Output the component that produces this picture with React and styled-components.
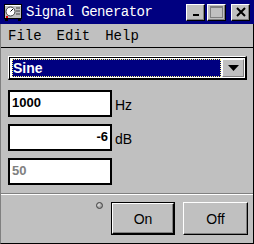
import React from "react";
import styled, { createGlobalStyle } from "styled-components";

const Global = createGlobalStyle`
  html, body { margin: 0; padding: 0; background: #c0c0c0; }
  body { font-family: "Liberation Sans", Arial, sans-serif; }
`;

const Window = styled.div`
  width: 254px;
  height: 244px;
  box-sizing: border-box;
  display: flex;
  flex-direction: column;
  background: #c0c0c0;
  overflow: hidden;
`;

const TitleBar = styled.div`
  height: 24px;
  flex: none;
  background: #000080;
  display: flex;
  align-items: center;
  padding: 0 4px 0 4px;
  box-sizing: border-box;
`;

const TitleText = styled.div`
  flex: 1;
  color: #fff;
  font-family: "Liberation Mono", "Courier New", monospace;
  font-size: 14px;
  letter-spacing: -0.5px;
  margin-left: 4px;
  white-space: nowrap;
`;

const TitleButtons = styled.div`
  display: flex;
  gap: 2px;
  align-items: center;
`;

const TitleButton = styled.div`
  width: 19px;
  height: 17px;
  box-sizing: border-box;
  background: #c0c0c0;
  border-top: 1px solid #fff;
  border-left: 1px solid #fff;
  border-right: 1px solid #000;
  border-bottom: 1px solid #000;
  box-shadow: inset -1px -1px #808080;
  display: flex;
  align-items: center;
  justify-content: center;
  margin-left: ${(p) => (p.$gap ? "3px" : "0")};
`;

const Body = styled.div`
  flex: 1;
  display: flex;
  flex-direction: column;
  border-right: 1px solid #000;
  border-bottom: 1px solid #000;
  border-left: 1px solid #808080;
  box-sizing: border-box;
`;

const MenuBar = styled.div`
  height: 24px;
  flex: none;
  display: flex;
  align-items: center;
  gap: 15px;
  padding: 1px 0 0 7px;
  box-sizing: border-box;
  border-bottom: 1px solid #000;
  font-family: "Liberation Mono", "Courier New", monospace;
  font-size: 14px;
  color: #000;
`;

const Content = styled.div`
  display: flex;
  flex-direction: column;
  padding: 8px 6px 0 7px;
`;

const Combo = styled.div`
  height: 24px;
  box-sizing: border-box;
  display: flex;
  background: #fff;
  border-top: 1px solid #fff;
  border-left: 1px solid #fff;
  border-right: 2px solid #000;
  border-bottom: 2px solid #000;
  box-shadow: inset 1px 1px #000;
  padding: 2px 1px 1px 3px;
  gap: 1px;
`;

const Selected = styled.div`
  flex: 1;
  background: #000080;
  outline: 1px dotted #ffff80;
  outline-offset: -1px;
  color: #fff;
  font-weight: bold;
  font-size: 14px;
  display: flex;
  align-items: center;
  padding-left: 1px;
`;

const DropButton = styled.div`
  width: 22px;
  box-sizing: border-box;
  background: #c0c0c0;
  border-top: 1px solid #fff;
  border-left: 1px solid #fff;
  border-right: 1px solid #808080;
  border-bottom: 1px solid #808080;
  display: flex;
  align-items: center;
  justify-content: center;
`;

const Fields = styled.div`
  display: flex;
  flex-direction: column;
  gap: 7px;
  margin-top: 10px;
`;

const FieldRow = styled.div`
  display: flex;
  align-items: center;
  gap: 3px;
`;

const Field = styled.div`
  width: 104px;
  height: 27px;
  box-sizing: border-box;
  background: #fff;
  border: 2px solid #000;
  border-right-width: 1px;
  border-bottom-width: 1px;
  box-shadow: inset -1px -1px #000;
  font-weight: bold;
  font-size: 13px;
  color: ${(p) => (p.$disabled ? "#808080" : "#000")};
  text-align: ${(p) => (p.$right ? "right" : "left")};
  padding: 3px 3px 0 2px;
  line-height: 15px;
`;

const Unit = styled.span`
  font-size: 14px;
  color: #000;
  margin-top: 2px;
`;

const Separator = styled.div`
  margin-top: 8px;
  height: 0;
  border-top: 1px solid #808080;
  border-bottom: 1px solid #fff;
`;

const ButtonBar = styled.div`
  flex: 1;
  display: flex;
  justify-content: flex-end;
  align-items: flex-start;
  padding: 7px 5px 0 0;
`;

const Led = styled.div`
  width: 7px;
  height: 7px;
  box-sizing: border-box;
  border-radius: 50%;
  border: 1px solid #404040;
  background: radial-gradient(circle at 35% 35%, #e0e0e0 0, #a0a0a0 60%);
  margin: 0 8px 0 0;
`;

const Button = styled.div`
  width: ${(p) => p.$w}px;
  height: 33px;
  box-sizing: border-box;
  background: #c0c0c0;
  border: ${(p) => (p.$default ? "1px solid #000" : "none")};
  margin-left: ${(p) => p.$ml || 0}px;
  display: flex;
`;

const ButtonFace = styled.div`
  flex: 1;
  display: flex;
  align-items: center;
  justify-content: center;
  border-top: 1px solid #fff;
  border-left: 1px solid #fff;
  border-right: 1px solid #000;
  border-bottom: 1px solid #000;
  box-shadow: inset -1px -1px #808080;
  font-size: 14px;
  color: #000;
`;

const AppIcon = () => (
  <svg width="18" height="17" viewBox="0 0 18 17">
    <rect x="0.5" y="0.5" width="17" height="14" fill="#c0c0c0" stroke="#000" />
    <rect x="1" y="1" width="16" height="1" fill="#fff" />
    <circle cx="6.5" cy="7.5" r="4.5" fill="#fff" stroke="#404040" />
    <line x1="6.5" y1="7.5" x2="9" y2="5" stroke="#000" />
    <rect x="12" y="3" width="4" height="2" fill="#808080" />
    <rect x="12" y="6" width="4" height="2" fill="#808080" />
    <rect x="12" y="9" width="4" height="2" fill="#808080" />
    <rect x="2" y="12" width="2" height="2" fill="#e00000" />
    <rect x="1" y="15" width="3" height="2" fill="#000" />
    <rect x="14" y="15" width="3" height="2" fill="#000" />
  </svg>
);

export default function App() {
  return (
    <>
      <Global />
      <Window>
        <TitleBar>
          <AppIcon />
          <TitleText>Signal Generator</TitleText>
          <TitleButtons>
            <TitleButton>
              <svg width="8" height="8" viewBox="0 0 8 8">
                <rect x="1" y="6" width="6" height="2" fill="#000" />
              </svg>
            </TitleButton>
            <TitleButton>
              <svg width="13" height="12" viewBox="0 0 13 12">
                <rect x="0.5" y="0.5" width="12" height="11" fill="none" stroke="#808080" />
                <rect x="1" y="1" width="11" height="1" fill="#808080" />
              </svg>
            </TitleButton>
            <TitleButton $gap>
              <svg width="10" height="10" viewBox="0 0 10 10">
                <path d="M1 1 L9 9 M9 1 L1 9" stroke="#000" strokeWidth="2" />
              </svg>
            </TitleButton>
          </TitleButtons>
        </TitleBar>
        <Body>
          <MenuBar>
            <span>File</span>
            <span>Edit</span>
            <span>Help</span>
          </MenuBar>
          <Content>
            <Combo>
              <Selected>Sine</Selected>
              <DropButton>
                <svg width="11" height="6" viewBox="0 0 11 6">
                  <path d="M0 0 H11 L5.5 6 Z" fill="#000" />
                </svg>
              </DropButton>
            </Combo>
            <Fields>
              <FieldRow>
                <Field>1000</Field>
                <Unit>Hz</Unit>
              </FieldRow>
              <FieldRow>
                <Field $right>-6</Field>
                <Unit>dB</Unit>
              </FieldRow>
              <FieldRow>
                <Field $disabled>50</Field>
              </FieldRow>
            </Fields>
          </Content>
          <Separator />
          <ButtonBar>
            <Led />
            <Button $w={64} $default>
              <ButtonFace>On</ButtonFace>
            </Button>
            <Button $w={65} $ml={8}>
              <ButtonFace>Off</ButtonFace>
            </Button>
          </ButtonBar>
        </Body>
      </Window>
    </>
  );
}
